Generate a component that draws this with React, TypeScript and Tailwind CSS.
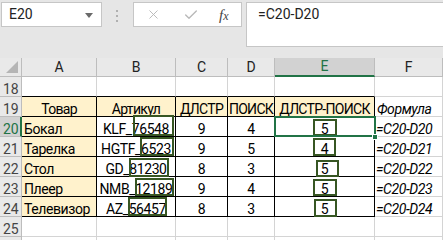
import { X, Check } from "lucide-react"

const font = { fontFamily: "Roboto, 'Noto Sans', sans-serif" }

type Row = {
  n: number
  a: string
  b: string
  c: string
  d: string
  e: string
  f: string
}

const rows: Row[] = [
  { n: 20, a: "Бокал", b: "KLF_76548", c: "9", d: "4", e: "5", f: "=C20-D20" },
  { n: 21, a: "Тарелка", b: "HGTF_6523", c: "9", d: "5", e: "4", f: "=C20-D21" },
  { n: 22, a: "Стол", b: "GD_81230", c: "8", d: "3", e: "5", f: "=C20-D22" },
  { n: 23, a: "Плеер", b: "NMB_12189", c: "9", d: "4", e: "5", f: "=C20-D23" },
  { n: 24, a: "Телевизор", b: "AZ_56457", c: "8", d: "3", e: "5", f: "=C20-D24" },
]

// hand-drawn rectangles sitting on top of the sheet (relative to the grid top)
const shapes = [
  { l: 133, t: 57, w: 41, h: 21 },
  { l: 140, t: 79, w: 34, h: 19 },
  { l: 129, t: 100, w: 40, h: 19 },
  { l: 135, t: 120, w: 39, h: 18 },
  { l: 128, t: 139, w: 39, h: 19 },
  { l: 313, t: 61, w: 24, h: 17 },
  { l: 313, t: 80, w: 23, h: 18 },
  { l: 316, t: 102, w: 23, h: 17 },
  { l: 313, t: 121, w: 24, h: 17 },
  { l: 314, t: 141, w: 23, h: 18 },
]

const cols = ["A", "B", "C", "D", "E", "F"]

function RowHead({ n, active = false }: { n: number; active?: boolean }) {
  return (
    <div
      className={`flex h-[20px] items-end pl-[3px] text-[14px] leading-[14px] border-b ${
        active
          ? "bg-[#d2d2d2] text-[#217346] border-r-2 border-r-[#217346] border-b-[#bdbdbd]"
          : "bg-[#e9e9e9] text-[#444] border-r border-[#bdbdbd]"
      }`}
    >
      {n}
    </div>
  )
}

function Cell({
  children,
  className = "",
}: {
  children?: React.ReactNode
  className?: string
}) {
  return (
    <div
      className={`flex h-[20px] items-end whitespace-nowrap text-[14px] leading-[14px] tracking-[-0.4px] text-black ${className}`}
    >
      {children}
    </div>
  )
}

const head = "justify-center border-b border-r border-black bg-[#fff2cc] tracking-[-0.7px]"
const grid = "border-b border-r border-[#d4d4d4]"

export default function App() {
  return (
    <div className="relative h-[240px] w-[443px] overflow-hidden bg-white" style={font}>
      {/* name box, buttons and formula bar */}
      <div className="relative h-[58px] bg-[#e6e6e6]">
        <div className="absolute left-[1px] top-[2px] flex h-[25px] w-[101px] items-center border border-[#c6c6c6] bg-white pl-[7px] text-[14px] text-[#222]">
          E20
          <div className="absolute right-[8px] top-[10px] h-0 w-0 border-x-[4px] border-t-[5px] border-x-transparent border-t-[#6a6a6a]" />
        </div>
        <div className="absolute left-[116px] top-[10px] flex flex-col gap-[3px]">
          <div className="h-[2px] w-[2px] bg-[#b0b0b0]" />
          <div className="h-[2px] w-[2px] bg-[#b0b0b0]" />
          <div className="h-[2px] w-[2px] bg-[#b0b0b0]" />
        </div>
        <div className="absolute left-[133px] top-[2px] flex h-[25px] w-[109px] items-center border border-[#c6c6c6] bg-white">
          <X className="absolute left-[12px] top-[4px] h-[15px] w-[15px] text-[#b8b8b8]" strokeWidth={1.5} />
          <Check className="absolute left-[49px] top-[4px] h-[16px] w-[16px] text-[#b8b8b8]" strokeWidth={2} />
          <span
            className="absolute left-[85px] top-[1px] text-[15px] italic text-[#444]"
            style={{ fontFamily: "'Liberation Serif', serif" }}
          >
            f<span className="text-[12px]">x</span>
          </span>
        </div>
        <div className="absolute left-[246px] top-[2px] h-[45px] w-[200px] border border-[#c6c6c6] bg-white pl-[11px] pt-[1px] text-[14px] text-[#222]">
          =C20-D20
        </div>
      </div>

      {/* sheet */}
      <div className="relative">
        <div className="grid grid-cols-[22px_75px_79px_52px_47px_100px_1fr]">
          {/* column headers */}
          <div className="relative h-[19px] border-b border-r border-[#bdbdbd] bg-[#e9e9e9]">
            <div className="absolute bottom-[3px] right-[3px] h-0 w-0 border-b-[12px] border-l-[12px] border-b-[#b5b5b5] border-l-transparent" />
          </div>
          {cols.map((c) =>
            c === "E" ? (
              <div
                key={c}
                className="flex h-[19px] items-center justify-center border-b-2 border-r border-b-[#217346] border-r-[#bdbdbd] bg-[#d2d2d2] text-[14px] text-[#217346]"
              >
                {c}
              </div>
            ) : (
              <div
                key={c}
                className="flex h-[19px] items-center justify-center border-b border-r border-[#bdbdbd] bg-[#e9e9e9] text-[14px] text-[#222]"
              >
                {c}
              </div>
            )
          )}

          {/* row 18 */}
          <RowHead n={18} />
          <Cell className="border-b border-r border-b-black border-r-[#d4d4d4]" />
          <Cell className="border-b border-r border-b-black border-r-[#d4d4d4]" />
          <Cell className="border-b border-r border-b-black border-r-[#d4d4d4]" />
          <Cell className="border-b border-r border-b-black border-r-[#d4d4d4]" />
          <Cell className="border-b border-r border-b-black border-r-[#d4d4d4]" />
          <Cell className={grid} />

          {/* row 19: headings */}
          <RowHead n={19} />
          <Cell className={head}>Товар</Cell>
          <Cell className={head}>Артикул</Cell>
          <Cell className={head}>ДЛСТР</Cell>
          <Cell className={head}>ПОИСК</Cell>
          <Cell className={head}>ДЛСТР-ПОИСК</Cell>
          <Cell className={`${grid} pl-[2px] italic`}>Формула</Cell>

          {rows.map((r) => (
            <div key={r.n} className="contents">
              <RowHead n={r.n} active={r.n === 20} />
              <Cell className="border-b border-r border-black bg-[#fff2cc] pl-[2px]">{r.a}</Cell>
              <Cell className="justify-center border-b border-r border-black">{r.b}</Cell>
              <Cell className="justify-center border-b border-r border-black">{r.c}</Cell>
              <Cell className="justify-center border-b border-r border-black">{r.d}</Cell>
              <Cell className="justify-center border-b border-r border-black">{r.e}</Cell>
              <Cell className={`${grid} pl-[1px] italic`}>{r.f}</Cell>
            </div>
          ))}

          {/* row 25 and the top of 26 */}
          <RowHead n={25} />
          <Cell className={grid} />
          <Cell className={grid} />
          <Cell className={grid} />
          <Cell className={grid} />
          <Cell className={grid} />
          <Cell className={grid} />
          <div className="h-[10px] border-r border-[#bdbdbd] bg-[#e9e9e9]" />
          <div className="h-[10px] border-r border-[#d4d4d4]" />
          <div className="h-[10px] border-r border-[#d4d4d4]" />
          <div className="h-[10px] border-r border-[#d4d4d4]" />
          <div className="h-[10px] border-r border-[#d4d4d4]" />
          <div className="h-[10px] border-r border-[#d4d4d4]" />
          <div className="h-[10px] border-r border-[#d4d4d4]" />
        </div>

        {/* drawn shapes */}
        {shapes.map((s, i) => (
          <div
            key={i}
            className="absolute border-2 border-[#375623]"
            style={{ left: s.l, top: s.t, width: s.w, height: s.h }}
          />
        ))}

        {/* active cell E20 with its fill handle */}
        <div className="absolute left-[274px] top-[58px] h-[21px] w-[102px] border-2 border-[#217346]" />
        <div className="absolute left-[372px] top-[76px] h-[6px] w-[6px] border border-white bg-[#217346]" />
      </div>
    </div>
  )
}
